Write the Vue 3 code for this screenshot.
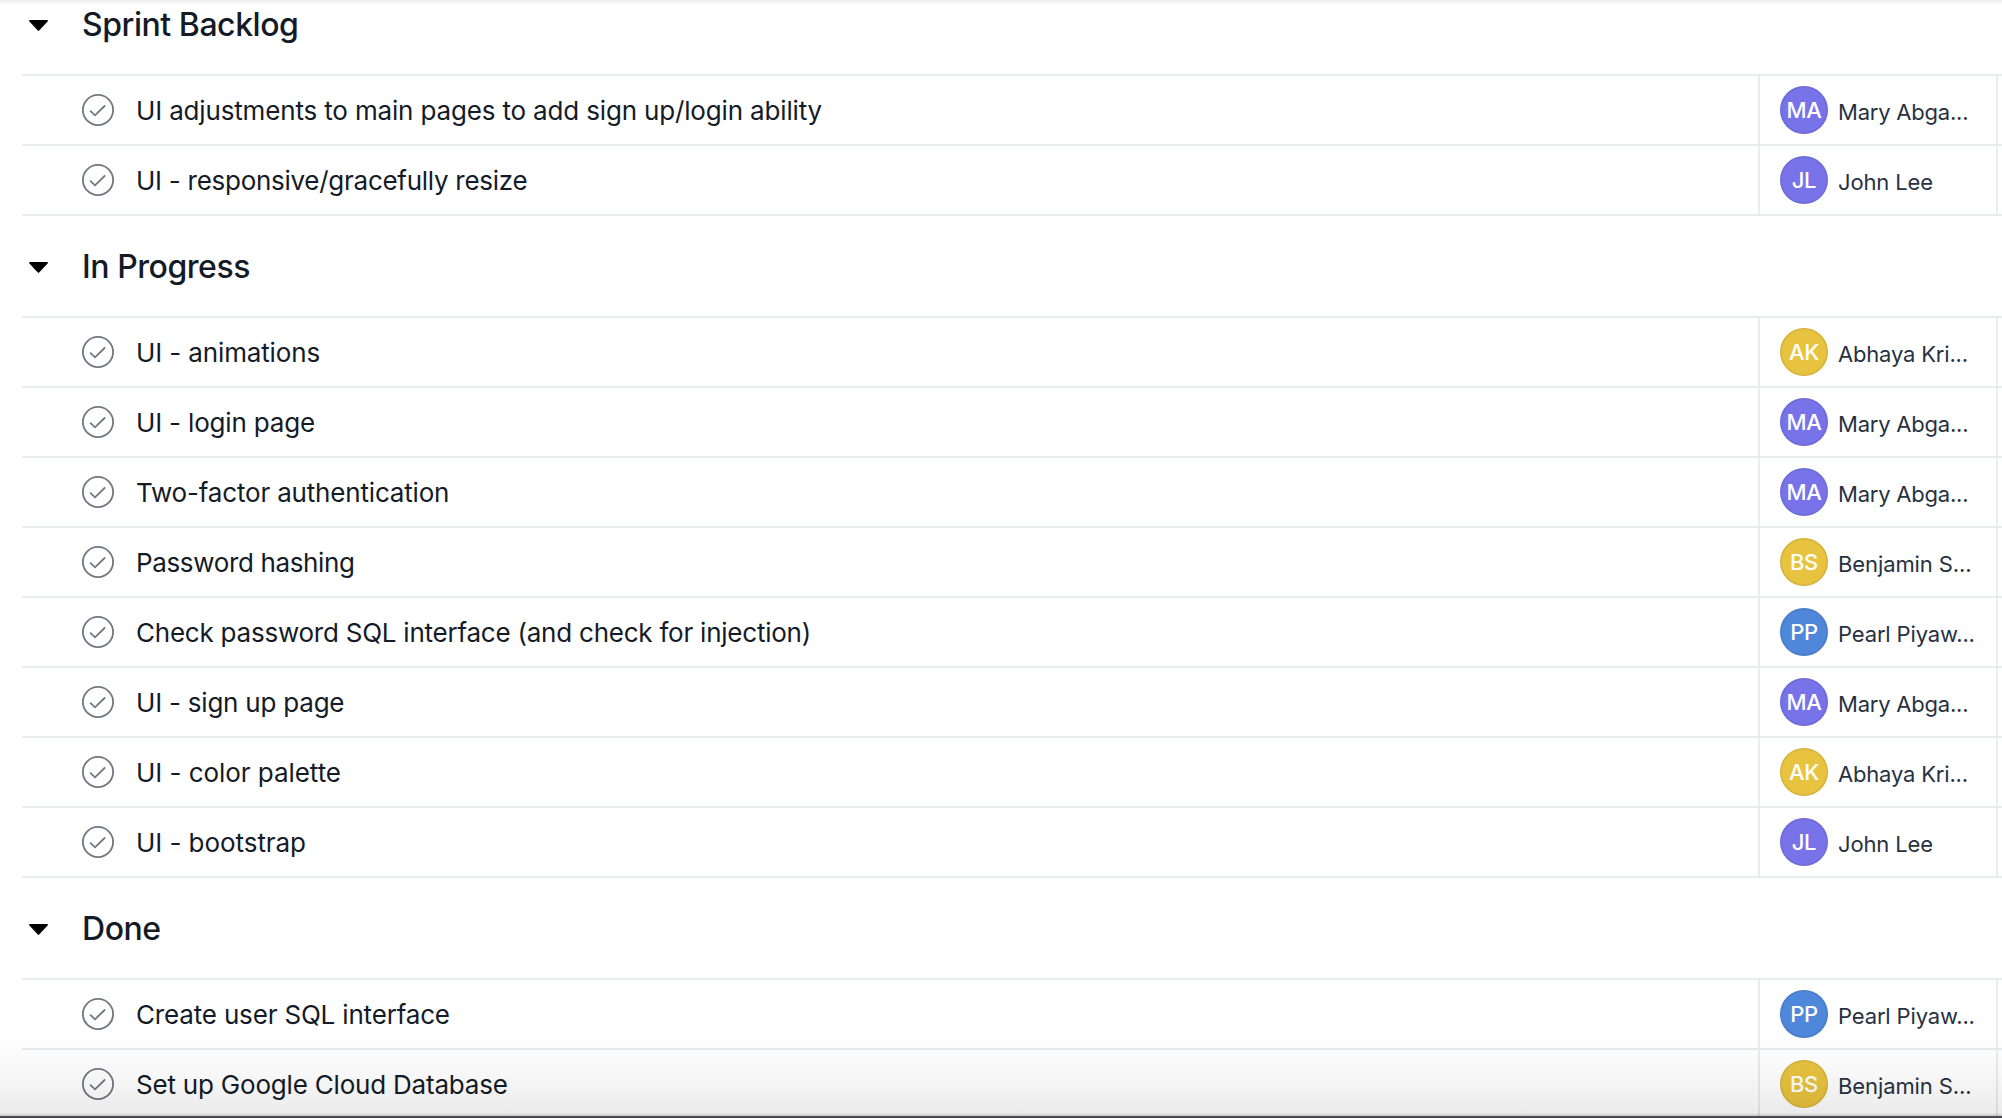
<script setup>
const people = {
  MA: { name: 'Mary Abga...', color: '#7873e9', tracking: -0.22 },
  JL: { name: 'John Lee', color: '#7873e9', tracking: -0.15 },
  AK: { name: 'Abhaya Kri...', color: '#e8c33f', tracking: -0.18 },
  BS: { name: 'Benjamin S...', color: '#e8c33f', tracking: -0.1 },
  PP: { name: 'Pearl Piyaw...', color: '#4f87db', tracking: -0.15 },
}
// Each task: label, assignee initials, letter tracking in px
const sections = [
  {
    title: 'Sprint Backlog',
    tasks: [
      ['UI adjustments to main pages to add sign up/login ability', 'MA', -0.16],
      ['UI - responsive/gracefully resize', 'JL', -0.27],
    ],
  },
  {
    title: 'In Progress',
    tasks: [
      ['UI - animations', 'AK', -0.13],
      ['UI - login page', 'MA', -0.18],
      ['Two-factor authentication', 'MA', -0.18],
      ['Password hashing', 'BS', -0.36],
      ['Check password SQL interface (and check for injection)', 'PP', -0.23],
      ['UI - sign up page', 'MA', -0.22],
      ['UI - color palette', 'AK', -0.05],
      ['UI - bootstrap', 'JL', -0.06],
    ],
  },
  {
    title: 'Done',
    tasks: [
      ['Create user SQL interface', 'PP', -0.17],
      ['Set up Google Cloud Database', 'BS', -0.2],
    ],
  },
]
</script>

<template>
  <main class="board">
    <section v-for="s in sections" :key="s.title" class="section">
      <header class="head">
        <svg class="caret" width="19" height="11" viewBox="0 0 19 11">
          <path d="M0.6 0H18.4Q19.3 0.6 18.6 1.4L10.2 10.4Q9.5 11 8.8 10.4L0.4 1.4Q-0.3 0.6 0.6 0Z" />
        </svg>
        <h2 class="title">{{ s.title }}</h2>
      </header>
      <div v-for="[label, who, tracking] in s.tasks" :key="label" class="row">
        <div class="task">
          <svg class="check" width="32" height="32" viewBox="0 0 32 32">
            <circle cx="16" cy="16" r="15.1" />
            <path d="M8.6 17.2L13 21.3L22.6 12" />
          </svg>
          <span class="label" :style="{ letterSpacing: tracking + 'px' }">{{ label }}</span>
        </div>
        <div class="assignee">
          <span class="avatar" :style="{ background: people[who].color }">{{ who }}</span>
          <span class="name" :style="{ letterSpacing: people[who].tracking + 'px' }">{{ people[who].name }}</span>
        </div>
      </div>
    </section>
    <div class="top-shade"></div>
    <div class="bottom-shade"></div>
  </main>
</template>

<style>
body {
  margin: 0;
  background: #fff;
}
</style>

<style scoped>
.board {
  position: relative;
  box-sizing: border-box;
  width: 2002px;
  height: 1118px;
  overflow: hidden;
  background: #fff;
  font-family: Inter, 'Liberation Sans', sans-serif;
  color: #151b26;
}
.section:first-child {
  margin-top: -26px;
}
.head {
  display: flex;
  align-items: center;
  height: 102px;
  margin-left: 22px;
  padding: 2px 0 0 7px;
  box-sizing: border-box;
  border-bottom: 2px solid #e8ecee;
}
.caret {
  flex: none;
  margin-right: 34px;
  fill: #000;
}
.title {
  margin: 0;
  font-size: 32px;
  line-height: 40px;
  font-weight: 500;
  letter-spacing: -0.45px;
}
.row {
  display: flex;
  box-sizing: border-box;
  height: 70px;
  margin-left: 22px;
  border-bottom: 2px solid #e8ecee;
}
.task {
  display: flex;
  flex: 1;
  align-items: center;
  padding-left: 60px;
}
.check {
  flex: none;
  margin-right: 22px;
  fill: none;
  stroke: #6f7782;
  stroke-width: 1.8;
  stroke-linecap: round;
}
.label {
  margin-top: 2px;
  font-size: 26px;
  line-height: 32px;
  white-space: nowrap;
}
.assignee {
  display: flex;
  align-items: center;
  box-sizing: border-box;
  width: 240px;
  margin-right: 4px;
  padding-left: 20px;
  border-left: 2px solid #e8ecee;
  border-right: 2px solid #e8ecee;
}
.avatar {
  flex: none;
  width: 48px;
  height: 48px;
  border-radius: 50%;
  box-shadow: inset 0 0 2px 1px rgba(0, 0, 0, 0.12);
  color: #fff;
  font-size: 22px;
  font-weight: 500;
  line-height: 48px;
  letter-spacing: -0.3px;
  text-align: center;
}
.name {
  margin: 4px 0 0 10px;
  color: #273140;
  font-size: 22px;
  line-height: 28px;
  white-space: nowrap;
}
.top-shade,
.bottom-shade {
  position: absolute;
  left: 0;
  right: 0;
  pointer-events: none;
}
.top-shade {
  top: 0;
  height: 5px;
  background: linear-gradient(rgba(0, 0, 0, 0.07), transparent);
}
.bottom-shade {
  bottom: 0;
  height: 84px;
  box-sizing: border-box;
  border-bottom: 2px solid #4b4a51;
  background: linear-gradient(transparent, rgba(0, 0, 0, 0.03) 40px, rgba(0, 0, 0, 0.08) 79px, rgba(0, 0, 0, 0.22));
}
</style>
